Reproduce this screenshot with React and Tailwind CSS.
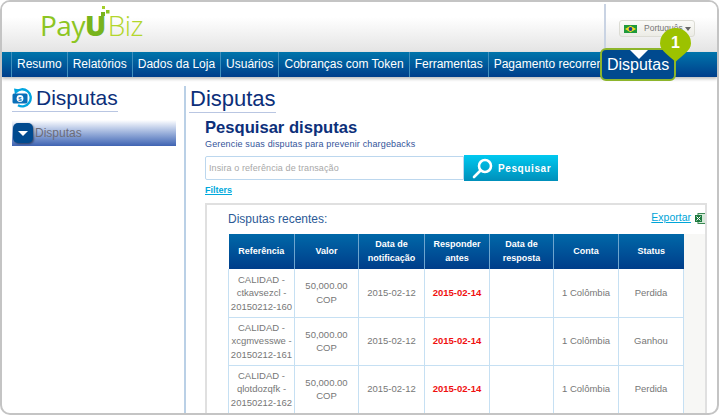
const navItems = ["Resumo", "Relatórios", "Dados da Loja", "Usuários", "Cobranças com Token", "Ferramentas", "Pagamento recorrente"];

const columns = [
  { label: ["Referência"], width: "w-[66px]" },
  { label: ["Valor"], width: "w-[64px]" },
  { label: ["Data de", "notificação"], width: "w-[66px]" },
  { label: ["Responder", "antes"], width: "w-[65px]" },
  { label: ["Data de", "resposta"], width: "w-[64px]" },
  { label: ["Conta"], width: "w-[65px]" },
  { label: ["Status"], width: "w-[65px]" },
];

const rows = [
  { ref: ["CALIDAD -", "ctkavsezcl -", "20150212-160"], status: "Perdida" },
  { ref: ["CALIDAD -", "xcgmvesswe -", "20150212-161"], status: "Ganhou" },
  { ref: ["CALIDAD -", "qlotdozqfk -", "20150212-162"], status: "Perdida" },
];

function Logo() {
  return (
    <div className="relative ml-[38px] mt-[3px] flex items-baseline font-['Open_Sans',sans-serif] text-[28px] leading-[40px] tracking-[-0.5px]">
      <span className="font-normal text-[#8cc522]">Pay</span>
      <span className="font-extrabold text-[#77b41c]">U</span>
      <span className="ml-[2px] font-light text-[#b3d62c]">Biz</span>
      <svg className="absolute left-[60px] top-[1px]" width="12" height="14" viewBox="0 0 12 14">
        <rect x="2" y="0" width="3" height="3" fill="#a5cf2a" />
        <rect x="6" y="4" width="3.5" height="3.5" fill="#8cc522" />
        <rect x="1" y="6" width="4" height="4" fill="#77b41c" />
      </svg>
    </div>
  );
}

function BrazilFlag() {
  return (
    <svg width="13" height="8" viewBox="0 0 13 8">
      <rect width="13" height="8" fill="#1f9a3c" />
      <polygon points="6.5,0.8 12,4 6.5,7.2 1,4" fill="#f5dc1e" />
      <circle cx="6.5" cy="4" r="1.9" fill="#1c3f94" />
    </svg>
  );
}

function DisputeIcon() {
  return (
    <svg width="21" height="21" viewBox="0 0 21 21">
      <path d="M4 5 A8.5 8.5 0 1 1 6 18.2" fill="none" stroke="#00a5e0" strokeWidth="2.4" />
      <polygon points="2,1.5 8,2.5 3,7.5" fill="#00a5e0" />
      <rect x="0.5" y="6.5" width="15" height="10" rx="1.5" fill="#0a6fb8" />
      <circle cx="8" cy="11.5" r="3.4" fill="#ffffff" />
      <text x="8" y="13.8" textAnchor="middle" fontSize="6" fontWeight="700" fill="#0a6fb8" fontFamily="Liberation Sans">$</text>
    </svg>
  );
}

function SearchIcon() {
  return (
    <svg width="21" height="21" viewBox="0 0 21 21">
      <circle cx="13" cy="8" r="6" fill="none" stroke="#ffffff" strokeWidth="2.6" />
      <path d="M8.5 12.5 L2 19" stroke="#ffffff" strokeWidth="2.6" strokeLinecap="round" />
    </svg>
  );
}

function ExcelIcon() {
  return (
    <svg className="shrink-0" width="11" height="11" viewBox="0 0 11 11">
      <rect x="3" y="0.5" width="8" height="10" fill="#d6ead9" stroke="#3d8a55" />
      <rect x="0" y="2" width="7" height="7" fill="#1c7a3f" />
      <path d="M1.5 3.5 L5.5 7.5 M5.5 3.5 L1.5 7.5" stroke="#ffffff" strokeWidth="1" />
    </svg>
  );
}

function Callout() {
  return (
    <>
      <div className="absolute left-[598px] top-[46px] flex h-[33px] w-[76px] items-center justify-center rounded-[6px] border-2 border-[#8db52c] bg-[#004a8f] text-[16px] text-white">
        Disputas
      </div>
      <div className="absolute left-[628px] top-[48px] h-0 w-0 border-x-[9px] border-t-[9px] border-x-transparent border-t-white" />
      <svg className="absolute left-[658px] top-[26px]" width="31" height="34" viewBox="0 0 31 34">
        <path d="M15.5 0 A15.5 15.5 0 0 1 31 15.5 C31 23 21 28 15.5 34 C10 28 0 23 0 15.5 A15.5 15.5 0 0 1 15.5 0 Z" fill="#9cc200" />
      </svg>
      <span className="absolute left-[658px] top-[26px] w-[31px] text-center text-[16px] font-bold leading-[30px] text-white">1</span>
    </>
  );
}

export default function App() {
  return (
    <div className="h-[418px] w-[720px] overflow-hidden bg-white font-['Liberation_Sans',Arial,sans-serif]">
      <div className="relative h-[415px] w-[719px] overflow-hidden rounded-[10px] border-2 border-[#c4c4c4] bg-white">
        {/* Header */}
        <header className="flex h-[50px] justify-between bg-gradient-to-b from-white from-30% to-[#e4e4e4]">
          <Logo />
          <div className="mr-[22px] flex">
            <div className="mr-[13px] mt-[2px] h-[44px] w-[2px] bg-[#c9d3e3]" />
            <div className="mt-[18px] flex h-[17px] w-[76px] items-center rounded-[3px] border border-[#dcdcd4] bg-gradient-to-b from-[#fbfbf8] to-[#ecece6] pl-[4px] text-[8.5px] text-[#777]">
              <BrazilFlag />
              <span className="ml-[7px]">Português</span>
              <span className="ml-auto mr-[3px] h-0 w-0 border-x-[3px] border-t-[4px] border-x-transparent border-t-[#666]" />
            </div>
          </div>
        </header>

        {/* Nav */}
        <nav className="flex h-[25px] overflow-hidden bg-gradient-to-b from-[#0075ab] to-[#003e8b] pl-[9px] shadow-[0_2px_3px_rgba(0,0,0,0.25)]">
          {navItems.map((item) => (
            <a key={item} className="whitespace-nowrap border-l border-[#3f8fbe] px-[5px] text-[12px] leading-[25px] text-white">
              {item}
            </a>
          ))}
        </nav>

        <div className="flex">
          {/* Sidebar */}
          <aside className="w-[182px] shrink-0 pl-[10px] pt-[7px]">
            <div className="flex h-[28px] w-[106px] items-center gap-[3px] border-b border-[#b9c6e2]">
              <DisputeIcon />
              <h2 className="text-[21px] leading-[24px] text-[#0c2f7a]">Disputas</h2>
            </div>
            <div className="mt-[8px] flex h-[26px] w-[164px] items-center bg-gradient-to-b from-white to-[#3f63b2]">
              <div className="ml-[1px] flex h-[20px] w-[20px] items-center justify-center rounded-[5px] bg-[#004a8f] shadow-[1px_1px_2px_rgba(0,0,0,0.45)]">
                <span className="h-0 w-0 border-x-[5px] border-t-[5px] border-x-transparent border-t-white" />
              </div>
              <span className="ml-[2px] text-[12px] text-[#6c6c78]">Disputas</span>
            </div>
          </aside>

          {/* Main */}
          <main className="mt-[9px] min-w-0 flex-1 border-l-[2px] border-[#bad0e6] pl-[3px]">
            <h1 className="w-[87px] border-b border-[#b9c6e2] pl-[1px] text-[22px] leading-[26px] text-[#0c2f7a]">Disputas</h1>
            <div className="pl-[16px]">
              <h3 className="mt-[4px] text-[16.6px] font-bold leading-[21px] text-[#0c2f7a]">Pesquisar disputas</h3>
              <p className="text-[9px] leading-[12px] tracking-[0.15px] text-[#34549a]">Gerencie suas disputas para prevenir chargebacks</p>

              <div className="mt-[5px] flex h-[26px] w-[353px] items-center">
                <input
                  className="h-[24px] w-[259px] rounded-l-[2px] border border-[#bcd7ee] bg-white px-[3px] text-[9px] tracking-[0.1px] placeholder:text-[#a8a8a8]"
                  placeholder="Insira o referência de transação"
                />
                <button className="flex h-[26px] w-[94px] items-center bg-gradient-to-b from-[#00c9f0] to-[#008fba] pl-[8px] text-[10px] font-bold tracking-[0.6px] text-white">
                  <SearchIcon />
                  <span className="ml-[5px]">Pesquisar</span>
                </button>
              </div>

              <a className="mt-[3px] block text-[9px] font-bold leading-[12px] text-[#00a9dc] underline">Filters</a>

              {/* Results panel */}
              <section className="mt-[7px] h-[212px] w-[502px] overflow-hidden border-2 border-[#e0e0e0] bg-white">
                <div className="flex h-[29px] items-center justify-between pl-[21px]">
                  <span className="mb-[2px] text-[12px] text-[#2c5a96]">Disputas recentes:</span>
                  <div className="mb-[3px] flex items-center">
                    <a className="text-[10.5px] text-[#00a5d8] underline">Exportar</a>
                    <span className="ml-[4px] mr-[-1px]"><ExcelIcon /></span>
                  </div>
                </div>
                <div className="flex">
                  <div className="w-[21px] shrink-0" />
                  <table className="w-[455px] shrink-0 table-fixed self-start border-collapse text-center text-[9.5px] leading-[13.5px] text-[#777]">
                    <thead>
                      <tr className="h-[35px] bg-gradient-to-b from-[#0068a8] to-[#003d8a] font-bold text-white">
                        {columns.map((col, i) => (
                          <th key={i} className={`${col.width} border-r border-[#6ea5cf] p-0 text-[9px] font-bold last:border-r-0`}>
                            {col.label.map((line) => (
                              <div key={line}>{line}</div>
                            ))}
                          </th>
                        ))}
                      </tr>
                    </thead>
                    <tbody>
                      {rows.map((row) => (
                        <tr key={row.ref[1]} className="h-[48px] border-b border-[#c6e0f3]">
                          <td className="border-x border-[#c6e0f3] p-0">
                            {row.ref.map((line) => (
                              <div key={line}>{line}</div>
                            ))}
                          </td>
                          <td className="border-x border-[#c6e0f3] p-0">
                            <div>50,000.00</div>
                            <div>COP</div>
                          </td>
                          <td className="border-x border-[#c6e0f3] p-0">2015-02-12</td>
                          <td className="border-x border-[#c6e0f3] p-0 font-bold text-[#f01010]">2015-02-14</td>
                          <td className="border-x border-[#c6e0f3] p-0"></td>
                          <td className="border-x border-[#c6e0f3] p-0">1 Colômbia</td>
                          <td className="border-x border-[#c6e0f3] p-0">{row.status}</td>
                        </tr>
                      ))}
                    </tbody>
                  </table>
                  <div className="h-[212px] flex-1 bg-[#f7f7f5]" />
                </div>
              </section>
            </div>
          </main>
        </div>

        <Callout />
      </div>
    </div>
  );
}
